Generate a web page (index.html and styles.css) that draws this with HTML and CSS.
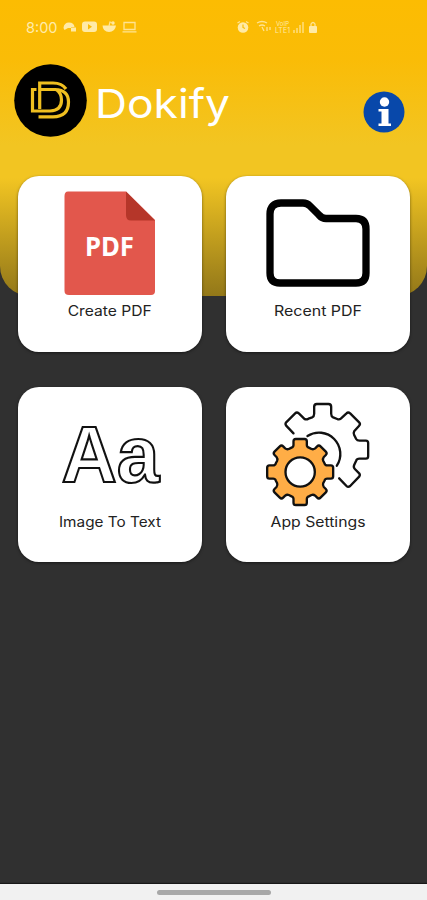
FILE: index.html
```html
<!DOCTYPE html>
<html lang="en">
<head>
<meta charset="utf-8">
<title>Dokify</title>
<link rel="stylesheet" href="styles.css">
</head>
<body>
<div class="app">
  <header class="hero">
    <div class="status">
      <span class="clock">8:00</span>
      <svg class="notices" viewBox="0 0 76 16">
        <path d="M1.500 9Q2 3.500 7 3.500Q12 3.500 12.500 8H9V9H6L2.500 11Z"/><rect x="9" y="8.500" width="5" height="4"/>
        <path fill-rule="evenodd" d="M23 2.500H32Q35 2.500 35 5.500V10Q35 13 32 13H23Q20 13 20 10V5.500Q20 2.500 23 2.500ZM26 5V10.500L30 7.800Z"/>
        <path d="M40.500 6.500H54Q53 13 47 13Q41 13 40.500 6.500Z"/><circle cx="51" cy="4" r="1.700"/><path class="line" d="M47 7L48 3L51 4"/>
        <path class="line" d="M62 3.500H73V10.500H62ZM60.500 12.800H74.500"/>
      </svg>
      <svg class="signals" viewBox="0 0 84 18">
        <circle cx="7" cy="9.500" r="5.300"/><path class="line" d="M1.500 5L4 3.500M10 3.500L12.500 5"/><path class="hand" d="M7 6.500V9.500L9 10.500"/>
        <path class="line" d="M21 5Q26 2 31 5M23 8Q26 6 29 8M26 9L28 13M31 9V13M34 9V12"/>
        <text x="40" y="8" font-size="6" textLength="13">VoIP</text><text x="39" y="15" font-size="7" textLength="15">LTE1</text>
        <path class="line" d="M58 12V15M61 10V15M64 7V15M67 4V15"/>
        <rect x="73" y="8" width="8" height="7" rx="1"/><path class="line" d="M75 8V6Q77 3 79 6V8"/>
      </svg>
    </div>
    <div class="brand">
      <svg class="logo" viewBox="0 0 73 73">
        <circle cx="36.500" cy="36.500" r="36.300"/>
        <path class="mark" d="M52 25Q48 19 39 19H25.700V45M26 25.500H41Q54.500 26 54.500 38Q54.500 52.800 39 52.800H24.500M22.500 25.500H18.500V47H36Q47.500 46.500 47.500 36Q47.500 29 42 25.700"/>
      </svg>
      <svg class="name" viewBox="0 0 140 50"><text x="0" y="38.500" textLength="135" lengthAdjust="spacingAndGlyphs">Dokify</text></svg>
      <svg class="info" viewBox="0 0 42 42">
        <circle class="disc" cx="21" cy="21" r="20.500"/>
        <circle cx="21.500" cy="11" r="4.700"/><path d="M15.500 18H25.500V32.500H28V35H15.500V32.500H18.500V20.500H15.500Z"/>
      </svg>
    </div>
  </header>
  <main class="cards">
    <section class="card">
      <svg class="icon" viewBox="0 0 184 115">
        <path class="sheet" d="M50 15.500H108L137 44V115Q137 119 133 119H51Q46.500 119 46.500 115V20Q46.500 15.500 50 15.500Z"/>
        <path class="fold" d="M108 15.500L137 44.500H113Q108 44.500 108 39Z"/>
        <text class="pdf" x="67" y="80" textLength="49" lengthAdjust="spacingAndGlyphs">PDF</text>
      </svg>
      <svg class="label" viewBox="0 0 184 24"><text x="49.700" y="15" textLength="84" lengthAdjust="spacingAndGlyphs">Create PDF</text></svg>
    </section>
    <section class="card">
      <svg class="icon" viewBox="0 0 184 115">
        <path class="folder" d="M44 38Q44 27 55 27H77Q81 27 84 30L93 39Q96 42.500 100 42.500H130Q140 42.500 140 53V97Q140 107 130 107H54Q44 107 44 97Z"/>
      </svg>
      <svg class="label" viewBox="0 0 184 24"><text x="48" y="15" textLength="88" lengthAdjust="spacingAndGlyphs">Recent PDF</text></svg>
    </section>
    <section class="card">
      <svg class="icon" viewBox="0 0 184 115">
        <text class="letters" x="43.500" y="95" textLength="98" lengthAdjust="spacingAndGlyphs">Aa</text>
      </svg>
      <svg class="label" viewBox="0 0 184 24"><text x="41" y="15" textLength="102" lengthAdjust="spacingAndGlyphs">Image To Text</text></svg>
    </section>
    <section class="card">
      <svg class="icon" viewBox="40.500 48 552 345">
        <path class="gear" d="M243 187L221 164Q217 159 221 154L248 127Q253 122 259 127L275 143Q281 147 288 143L299 139Q305 136 305 128V107Q305 99 313 99H348Q356 99 356 107V128Q356 136 362 139L374 144Q380 147 385 143L402 127Q407 122 413 127L440 154Q445 159 440 164L425 181Q422 186 425 192L431 204Q434 209 441 209H460Q467 209 467 216V256Q467 263 460 263H441Q433 263 431 269L425 282Q422 289 427 294L440 307Q444 312 440 317L413 345Q407 350 402 345L380 322M285 195A64 64 0 0 1 373 284"/>
        <g transform="translate(263 303)">
          <path class="gear orange" d="M-13-99H13Q20-99 20-92V-81Q20-75 26-73L34-69Q40-67 45-71L51-77Q56-82 61-77L77-61Q82-56 77-51L71-45Q67-40 69-34L73-26Q75-20 81-20H92Q99-20 99-13V13Q99 20 92 20H81Q75 20 73 26L69 34Q67 40 71 45L77 51Q82 56 77 61L61 77Q56 82 51 77L45 71Q40 67 34 69L26 73Q20 75 20 81V92Q20 99 13 99H-13Q-20 99-20 92V81Q-20 75-26 73L-34 69Q-40 67-45 71L-51 77Q-56 82-61 77L-77 61Q-82 56-77 51L-71 45Q-67 40-69 34L-73 26Q-75 20-81 20H-92Q-99 20-99 13V-13Q-99-20-92-20H-81Q-75-20-73-26L-69-34Q-67-40-71-45L-77-51Q-82-56-77-61L-61-77Q-56-82-51-77L-45-71Q-40-67-34-69L-26-73Q-20-75-20-81V-92Q-20-99-13-99Z"/>
          <circle class="gear hole" r="44"/>
        </g>
      </svg>
      <svg class="label" viewBox="0 0 184 24"><text x="44.500" y="15" textLength="95" lengthAdjust="spacingAndGlyphs">App Settings</text></svg>
    </section>
  </main>
  <footer class="nav"><span class="handle"></span></footer>
</div>
</body>
</html>
```
FILE: styles.css
```css
* { box-sizing: border-box; }
body { margin: 0; font-family: Inter, "Liberation Sans", sans-serif; }
svg { display: block; overflow: visible; }
.app { display: flex; flex-direction: column; height: 900px; background: #303030; overflow: hidden; }
.hero {
  flex: none; height: 296px; border-radius: 0 0 30px 30px;
  background: linear-gradient(#fcbc02 0, #fabc07 60px, #f2c522 145px, #f2c522 178px, #a3851b 275px, #937819 296px);
}
.status { display: flex; align-items: center; height: 64px; padding: 0 0 10px 26px; color: #ffebaa; fill: #ffeaa6; }
.clock { width: 36px; font-size: 14.5px; }
.notices { width: 76px; height: 16px; }
.signals { width: 84px; height: 18px; margin-left: 98px; }
.line { fill: none; stroke: #ffe391; stroke-width: 1.3; }
.hand { fill: none; stroke: #fabc05; stroke-width: 1.2; }
.brand { display: flex; height: 73px; padding-left: 14px; }
.logo { width: 73px; height: 73px; }
.mark { fill: none; stroke: #efbf20; stroke-width: 3.2; }
.name { width: 140px; height: 50px; margin: 15px 0 0 8px; fill: #fff; font-size: 40px; }
.info { width: 42px; height: 42px; margin: 27px 0 0 128px; fill: #fff; }
.disc { fill: #0848aa; }
.cards { display: grid; grid-template-columns: 184px 184px; gap: 35px 24px; margin: -120px 0 0 18px; }
.card { height: 175.500px; border-radius: 21px; background: #fff; box-shadow: 0 1px 3px rgb(0 0 0 / 50%); }
.icon { width: 184px; height: 115px; }
.label { width: 184px; height: 24px; margin-top: 10px; font-size: 14px; fill: #222; }
.sheet { fill: #e2574c; }
.fold { fill: #b53629; }
.pdf { font: 700 26px "Noto Sans", sans-serif; fill: #fff; }
.folder { fill: none; stroke: #000; stroke-width: 7.300; }
.letters { font: 700 80px "Liberation Sans", sans-serif; fill: #fff; stroke: #111; stroke-width: 2.200; }
.gear { fill: none; stroke: #111; stroke-width: 7; stroke-linecap: round; stroke-linejoin: round; }
.orange { fill: #ffad46; }
.hole { fill: #fff; }
.nav { display: flex; justify-content: center; height: 16px; margin-top: auto; padding-top: 6px; background: #f1f1f1; box-shadow: 0 -1px 1px #181818; }
.handle { width: 114px; height: 5px; border-radius: 3px; background: #a8a8a8; }
```
